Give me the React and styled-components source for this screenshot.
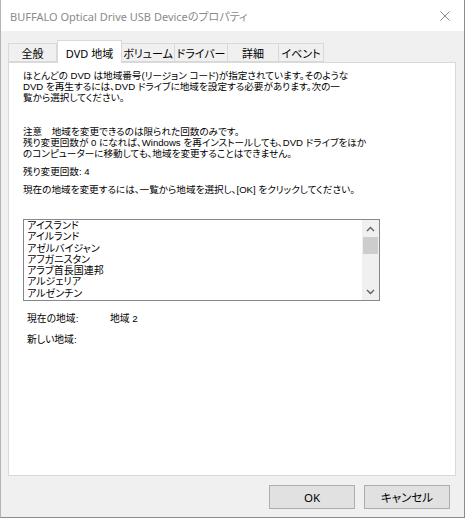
import React from 'react';
import styled, { createGlobalStyle } from 'styled-components';

const GlobalStyle = createGlobalStyle`
  html, body {
    margin: 0;
    padding: 0;
    background: #ffffff;
  }
  * {
    box-sizing: border-box;
  }
`;

const uiFont = `"Liberation Sans", "Noto Sans CJK JP", sans-serif`;

const Window = styled.div`
  width: 465px;
  height: 518px;
  display: flex;
  flex-direction: column;
  border-left: 1px solid #b4b4b4;
  border-right: 1px solid #8c8c8c;
  border-bottom: 1px solid #8c8c8c;
  background: #f0f0f0;
  font-family: ${uiFont};
  color: #000;
`;

const TitleBar = styled.div`
  height: 31px;
  flex: none;
  display: flex;
  align-items: center;
  justify-content: space-between;
  background: #ffffff;
  padding: 0 10px 0 9px;
`;

const Title = styled.div`
  font-family: "Noto Sans", "Noto Sans CJK JP", sans-serif;
  font-size: 11px;
  color: #8a8a8a;
  font-feature-settings: "palt";
`;

const CloseIcon = styled.svg`
  width: 10px;
  height: 10px;
  margin-right: 4px;
`;

const Body = styled.div`
  flex: 1;
  display: flex;
  flex-direction: column;
  padding: 8px 8px 0 7px;
`;

const TabRow = styled.div`
  display: flex;
  align-items: flex-end;
  height: 23px;
  padding-left: 1px;
`;

const Tab = styled.div`
  position: relative;
  width: ${p => p.w}px;
  height: ${p => (p.active ? 23 : 19)}px;
  margin: ${p => (p.active ? '0 0 -1px' : '0 0 0 -1px')};
  padding-top: ${p => (p.active ? 1 : 0)}px;
  display: flex;
  align-items: center;
  justify-content: center;
  font-family: "Noto Sans", "Noto Sans CJK JP", sans-serif;
  font-size: 11px;
  white-space: nowrap;
  border: 1px solid #d9d9d9;
  border-bottom: ${p => (p.active ? 'none' : '1px solid #d9d9d9')};
  background: ${p => (p.active ? '#ffffff' : '#f0f0f0')};
  z-index: ${p => (p.active ? 2 : 1)};
  font-feature-settings: "palt";
`;

const Panel = styled.div`
  height: 414px;
  border: 1px solid #d9d9d9;
  background: #ffffff;
  padding: 7px 14px 0 14px;
  font-size: 9.6px;
  line-height: 11px;
  font-feature-settings: "palt";
`;

const Para = styled.p`
  margin: 0 0 ${p => p.gap || 0}px;
  white-space: nowrap;
`;

const ListBox = styled.div`
  width: 357px;
  height: 82px;
  border: 1px solid #828790;
  display: flex;
  margin-top: 24px;
  overflow: hidden;
`;

const Items = styled.ul`
  flex: 1;
  list-style: none;
  margin: 0;
  padding: 0 0 0 3px;
  overflow: hidden;
`;

const Item = styled.li`
  height: 11.3px;
  line-height: 11px;
  font-size: 10px;
  white-space: nowrap;
`;

const ScrollBar = styled.div`
  width: 17px;
  background: #f0f0f0;
  display: flex;
  flex-direction: column;
  align-items: center;
`;

const Arrow = styled.div`
  height: 17px;
  width: 17px;
  display: flex;
  align-items: center;
  justify-content: center;
`;

const Thumb = styled.div`
  width: 15px;
  height: 17px;
  background: #cdcdcd;
`;

const Track = styled.div`
  flex: 1;
`;

const InfoRow = styled.div`
  display: flex;
  padding-left: 4px;
  margin-top: ${p => p.top}px;
  font-size: 9.8px;
`;

const InfoLabel = styled.span`
  width: 83px;
`;

const ButtonRow = styled.div`
  display: flex;
  justify-content: flex-end;
  gap: 9px;
  padding: 9px 6px 0 0;
`;

const Button = styled.button`
  width: 86px;
  height: 24px;
  border: 1px solid #adadad;
  background: #e1e1e1;
  font-family: "Noto Sans", "Noto Sans CJK JP", sans-serif;
  font-size: 11.5px;
  color: #000;
  padding: 0;
  font-feature-settings: "palt";
`;

const tabs = [
  { label: '全般', w: 49 },
  { label: 'DVD 地域', w: 65, active: true },
  { label: 'ボリューム', w: 54 },
  { label: 'ドライバー', w: 54 },
  { label: '詳細', w: 52 },
  { label: 'イベント', w: 46 },
];

const regions = [
  'アイスランド',
  'アイルランド',
  'アゼルバイジャン',
  'アフガニスタン',
  'アラブ首長国連邦',
  'アルジェリア',
  'アルゼンチン',
  'アルバ',
];

const Chevron = ({ up }) => (
  <svg width="9" height="6" viewBox="0 0 9 6">
    <path
      d={up ? 'M1 5 L4.5 1.5 L8 5' : 'M1 1 L4.5 4.5 L8 1'}
      fill="none"
      stroke="#606060"
      strokeWidth="1.4"
    />
  </svg>
);

export default function App() {
  return (
    <>
      <GlobalStyle />
      <Window>
        <TitleBar>
          <Title>BUFFALO Optical Drive USB Deviceのプロパティ</Title>
          <CloseIcon viewBox="0 0 10 10">
            <path d="M0.5 0.5 L9.5 9.5 M9.5 0.5 L0.5 9.5" stroke="#8a8a8a" strokeWidth="1" />
          </CloseIcon>
        </TitleBar>
        <Body>
          <TabRow>
            {tabs.map(t => (
              <Tab key={t.label} w={t.w} active={t.active}>
                {t.label}
              </Tab>
            ))}
          </TabRow>
          <Panel>
            <Para gap={23}>
              ほとんどの DVD は地域番号(リージョン コード)が指定されています。そのような
              <br />
              DVD を再生するには、DVD ドライブに地域を設定する必要があります。次の一
              <br />
              覧から選択してください。
            </Para>
            <Para gap={7}>
              注意　地域を変更できるのは限られた回数のみです。
              <br />
              残り変更回数が 0 になれば、Windows を再インストールしても、DVD ドライブをほか
              <br />
              のコンピューターに移動しても、地域を変更することはできません。
            </Para>
            <Para gap={7}>残り変更回数: 4</Para>
            <Para>現在の地域を変更するには、一覧から地域を選択し、[OK] をクリックしてください。</Para>
            <ListBox>
              <Items>
                {regions.map(r => (
                  <Item key={r}>{r}</Item>
                ))}
              </Items>
              <ScrollBar>
                <Arrow>
                  <Chevron up />
                </Arrow>
                <Thumb />
                <Track />
                <Arrow>
                  <Chevron />
                </Arrow>
              </ScrollBar>
            </ListBox>
            <InfoRow top={12}>
              <InfoLabel>現在の地域:</InfoLabel>
              <span>地域 2</span>
            </InfoRow>
            <InfoRow top={10}>
              <InfoLabel>新しい地域:</InfoLabel>
            </InfoRow>
          </Panel>
          <ButtonRow>
            <Button>OK</Button>
            <Button>キャンセル</Button>
          </ButtonRow>
        </Body>
      </Window>
    </>
  );
}
